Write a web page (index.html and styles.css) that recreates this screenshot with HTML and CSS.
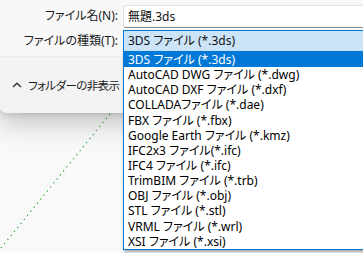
FILE: index.html
```html
<!DOCTYPE html>
<html lang="ja">
<head>
<meta charset="utf-8">
<link rel="stylesheet" href="styles.css">
</head>
<body>
<div class="scene">
  <svg class="axis" width="363" height="253" viewBox="0 0 363 253">
    <line x1="1" y1="248" x2="118" y2="104" />
  </svg>
  <div class="dialog">
    <div class="fields">
      <label class="lbl">ファイル名(N):</label>
      <div class="input">無題.3ds</div>
      <label class="lbl">ファイルの種類(T):</label>
      <div class="combo">3DS ファイル (*.3ds)</div>
    </div>
    <div class="footer">
      <svg class="chev" width="10" height="6" viewBox="0 0 10 6"><polyline points="1,5 5,1.2 9,5"/></svg>
      <span class="toggle">フォルダーの非表示</span>
    </div>
  </div>
  <ul class="list">
    <li class="sel">3DS ファイル (*.3ds)</li>
    <li>AutoCAD DWG ファイル (*.dwg)</li>
    <li>AutoCAD DXF ファイル (*.dxf)</li>
    <li>COLLADAファイル (*.dae)</li>
    <li>FBX ファイル (*.fbx)</li>
    <li>Google Earth ファイル (*.kmz)</li>
    <li>IFC2x3 ファイル(*.ifc)</li>
    <li>IFC4 ファイル (*.ifc)</li>
    <li>TrimBIM ファイル (*.trb)</li>
    <li>OBJ ファイル (*.obj)</li>
    <li>STL ファイル (*.stl)</li>
    <li>VRML ファイル (*.wrl)</li>
    <li>XSI ファイル (*.xsi)</li>
  </ul>
</div>
</body>
</html>
```
FILE: styles.css
```css
html, body {
  margin: 0;
  padding: 0;
}
body {
  width: 363px;
  height: 253px;
  overflow: hidden;
  background: #f9f9f9;
  font-family: "Noto Sans", "Noto Sans CJK JP", sans-serif;
  font-size: 12px;
  color: #1a1a1a;
  font-feature-settings: "palt";
}
.scene {
  position: relative;
  width: 363px;
  height: 253px;
}
.axis {
  position: absolute;
  left: 0;
  top: 0;
}
.axis line {
  stroke: #2aa52a;
  stroke-width: 1.2;
  stroke-dasharray: 1.2 4;
}
.dialog {
  position: relative;
  width: 380px;
  margin-left: -1px;
  background: #f3f3f3;
  border-radius: 0 0 8px 8px;
  box-shadow: 0 10px 28px rgba(0, 0, 0, 0.22), 0 2px 6px rgba(0, 0, 0, 0.12);
}
.fields {
  display: grid;
  grid-template-columns: 119px 1fr;
  column-gap: 5px;
  row-gap: 2px;
  padding: 5px 0 4px;
  background: #f8f8f8;
}
.lbl {
  text-align: right;
  line-height: 22px;
  color: #1b1b1b;
}
.input {
  height: 21px;
  line-height: 21px;
  padding-left: 4px;
  background: #fff;
  border: 1px solid #e3e3e3;
  border-bottom-color: #8a8a8a;
  border-right: none;
  border-radius: 3px 0 0 3px;
  color: #111;
}
.combo {
  height: 20px;
  line-height: 20px;
  padding-left: 4px;
  background: #cce4f7;
  border: 1px solid #0078d7;
  border-right: none;
  color: #111;
}
.footer {
  height: 56px;
  display: flex;
  align-items: center;
  gap: 6px;
  padding-left: 13px;
  border-top: 1px solid #ebebeb;
}
.chev polyline {
  fill: none;
  stroke: #333;
  stroke-width: 1.5;
}
.toggle {
  color: #1b1b1b;
  font-size: 11.5px;
  letter-spacing: -0.6px;
}
.list {
  position: absolute;
  left: 123px;
  top: 51px;
  width: 250px;
  height: 197px;
  margin: 0;
  padding: 0;
  list-style: none;
  background: #fff;
  border: 1px solid #0078d7;
  box-shadow: 1px 2px 3px rgba(0, 0, 0, 0.35);
}
.list li {
  height: 15.15px;
  line-height: 15px;
  padding-left: 4px;
  color: #000;
  white-space: nowrap;
  overflow: hidden;
}
.list li.sel {
  background: #0078d7;
  color: #fff;
}
```
